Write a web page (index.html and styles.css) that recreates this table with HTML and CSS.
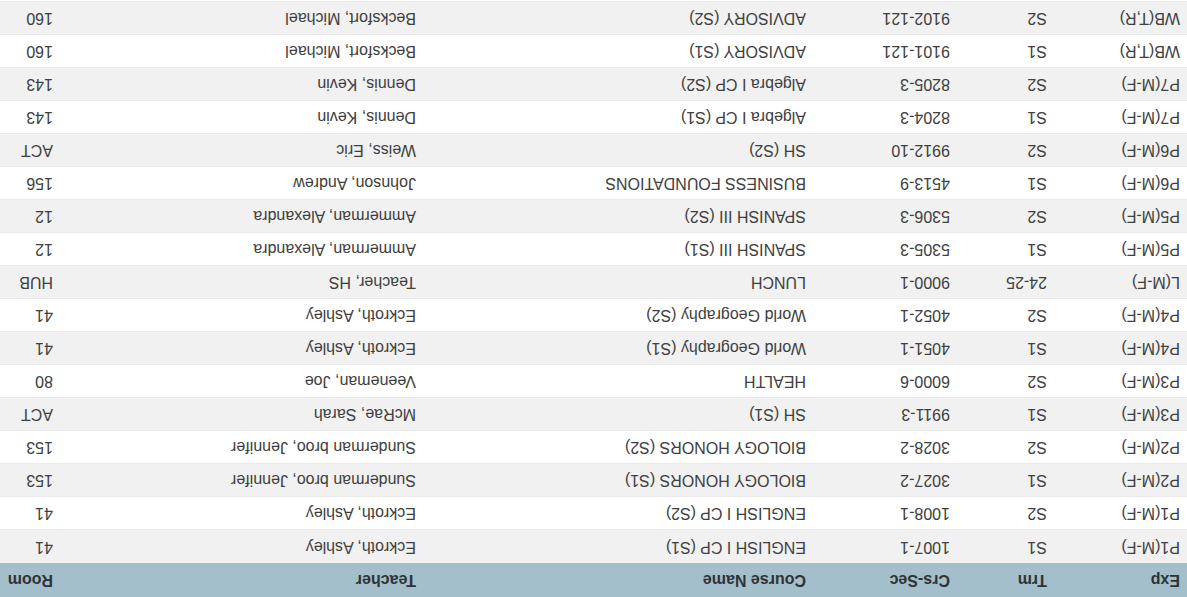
FILE: index.html
```html
<!DOCTYPE html>
<html>
<head>
<meta charset="utf-8">
<link rel="stylesheet" href="styles.css">
</head>
<body>
<div class="page">
<table class="sched">
<colgroup>
<col class="c-exp"><col class="c-trm"><col class="c-crs"><col class="c-name"><col class="c-teach"><col class="c-room">
</colgroup>
<thead>
<tr><th>Exp</th><th>Trm</th><th>Crs-Sec</th><th>Course Name</th><th>Teacher</th><th>Room</th></tr>
</thead>
<tbody>
<tr><td>P1(M-F)</td><td>S1</td><td>1007-1</td><td>ENGLISH I CP (S1)</td><td>Eckroth, Ashley</td><td>41</td></tr>
<tr><td>P1(M-F)</td><td>S2</td><td>1008-1</td><td>ENGLISH I CP (S2)</td><td>Eckroth, Ashley</td><td>41</td></tr>
<tr><td>P2(M-F)</td><td>S1</td><td>3027-2</td><td>BIOLOGY HONORS (S1)</td><td>Sunderman broo, Jennifer</td><td>153</td></tr>
<tr><td>P2(M-F)</td><td>S2</td><td>3028-2</td><td>BIOLOGY HONORS (S2)</td><td>Sunderman broo, Jennifer</td><td>153</td></tr>
<tr><td>P3(M-F)</td><td>S1</td><td>9911-3</td><td>SH (S1)</td><td>McRae, Sarah</td><td>ACT</td></tr>
<tr><td>P3(M-F)</td><td>S2</td><td>6000-6</td><td>HEALTH</td><td>Veeneman, Joe</td><td>80</td></tr>
<tr><td>P4(M-F)</td><td>S1</td><td>4051-1</td><td>World Geography (S1)</td><td>Eckroth, Ashley</td><td>41</td></tr>
<tr><td>P4(M-F)</td><td>S2</td><td>4052-1</td><td>World Geography (S2)</td><td>Eckroth, Ashley</td><td>41</td></tr>
<tr><td>L(M-F)</td><td>24-25</td><td>9000-1</td><td>LUNCH</td><td>Teacher, HS</td><td>HUB</td></tr>
<tr><td>P5(M-F)</td><td>S1</td><td>5305-3</td><td>SPANISH III (S1)</td><td>Ammerman, Alexandra</td><td>12</td></tr>
<tr><td>P5(M-F)</td><td>S2</td><td>5306-3</td><td>SPANISH III (S2)</td><td>Ammerman, Alexandra</td><td>12</td></tr>
<tr><td>P6(M-F)</td><td>S1</td><td>4513-9</td><td>BUSINESS FOUNDATIONS</td><td>Johnson, Andrew</td><td>156</td></tr>
<tr><td>P6(M-F)</td><td>S2</td><td>9912-10</td><td>SH (S2)</td><td>Weiss, Eric</td><td>ACT</td></tr>
<tr><td>P7(M-F)</td><td>S1</td><td>8204-3</td><td>Algebra I CP (S1)</td><td>Dennis, Kevin</td><td>143</td></tr>
<tr><td>P7(M-F)</td><td>S2</td><td>8205-3</td><td>Algebra I CP (S2)</td><td>Dennis, Kevin</td><td>143</td></tr>
<tr><td>WB(T,R)</td><td>S1</td><td>9101-121</td><td>ADVISORY (S1)</td><td>Becksfort, Michael</td><td>160</td></tr>
<tr><td>WB(T,R)</td><td>S2</td><td>9102-121</td><td>ADVISORY (S2)</td><td>Becksfort, Michael</td><td>160</td></tr>
</tbody>
</table>
</div>
</body>
</html>
```
FILE: styles.css
```css
html, body {
  margin: 0;
  padding: 0;
  background: #ffffff;
}
.page {
  width: 1187px;
  height: 597px;
  overflow: hidden;
  transform: rotate(180deg);
  background: #ffffff;
}
.sched {
  width: 1187px;
  border-collapse: collapse;
  table-layout: fixed;
  font-family: "Liberation Sans", Arial, sans-serif;
  font-size: 16px;
  color: #404040;
}
.c-exp { width: 133px; }
.c-trm { width: 97px; }
.c-crs { width: 144px; }
.c-name { width: 390px; }
.c-teach { width: 363px; }
.c-room { width: 60px; }
.sched th {
  background: #a4bfcc;
  color: #2f3336;
  font-weight: bold;
  text-align: left;
  height: 34px;
  padding: 0 0 0 7px;
  box-sizing: border-box;
}
.sched td {
  height: 33px;
  padding: 0 0 0 7px;
  box-sizing: border-box;
  text-align: left;
  white-space: nowrap;
  border-bottom: 1px solid #e9e9e9;
}
.sched tbody tr:nth-child(odd) td {
  background: #f1f1f1;
}
```
